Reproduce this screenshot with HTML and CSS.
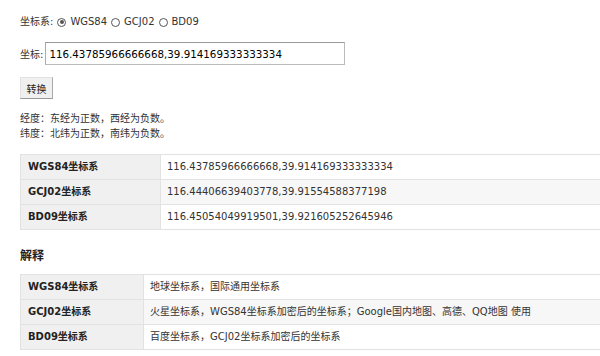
FILE: index.html
```html
<!DOCTYPE html>
<html lang="zh">
<head>
<meta charset="utf-8">
<title>坐标转换</title>
<link rel="stylesheet" href="styles.css">
</head>
<body>
<div class="page">
  <div class="sys-row">
    <span>坐标系:</span>
    <label class="radio"><span class="dot on"></span>WGS84</label>
    <label class="radio"><span class="dot"></span>GCJ02</label>
    <label class="radio"><span class="dot"></span>BD09</label>
  </div>
  <div class="coord-row">
    <span>坐标:</span>
    <input class="coord" type="text" value="116.43785966666668,39.914169333333334">
  </div>
  <button class="btn">转换</button>
  <div class="notes">
    <p>经度：东经为正数，西经为负数。</p>
    <p>纬度：北纬为正数，南纬为负数。</p>
  </div>
  <table class="grid res">
    <tr><th>WGS84坐标系</th><td>116.43785966666668,39.914169333333334</td></tr>
    <tr class="alt"><th>GCJ02坐标系</th><td>116.44406639403778,39.91554588377198</td></tr>
    <tr><th>BD09坐标系</th><td>116.45054049919501,39.921605252645946</td></tr>
  </table>
  <h3 class="title">解释</h3>
  <table class="grid exp">
    <tr><th>WGS84坐标系</th><td>地球坐标系，国际通用坐标系</td></tr>
    <tr class="alt"><th>GCJ02坐标系</th><td>火星坐标系，WGS84坐标系加密后的坐标系；Google国内地图、高德、QQ地图 使用</td></tr>
    <tr><th>BD09坐标系</th><td>百度坐标系，GCJ02坐标系加密后的坐标系</td></tr>
  </table>
</div>
</body>
</html>
```
FILE: styles.css
```css
html { overflow: hidden; background: #fff; }
body {
  margin: 0;
  font-family: "DejaVu Sans", "Noto Sans CJK SC", sans-serif;
  font-size: 10px;
  color: #333;
}
.page { padding: 0 0 0 20px; }
.sys-row {
  margin-top: 15px;
  line-height: 14px;
  height: 14px;
  display: flex;
  align-items: center;
  gap: 4px;
}
.radio { display: inline-flex; align-items: center; gap: 4px; }
.dot {
  width: 9px; height: 9px;
  border: 1px solid #555;
  border-radius: 50%;
  box-sizing: border-box;
  display: inline-block;
  position: relative;
  background: #fff;
}
.dot.on::after {
  content: "";
  position: absolute;
  left: 1.5px; top: 1.5px;
  width: 4px; height: 4px;
  border-radius: 50%;
  background: #555;
}
.coord-row {
  margin-top: 13px;
  display: flex;
  align-items: center;
  gap: 2px;
  height: 23px;
}
.coord {
  width: 300px;
  height: 23px;
  box-sizing: border-box;
  border: 1px solid #bbb;
  border-top-color: #999;
  border-left-color: #aaa;
  padding: 0 3px;
  font-family: "DejaVu Sans", sans-serif;
  font-size: 10.3px;
  color: #000;
  outline: none;
}
.btn {
  display: block;
  margin-top: 12px;
  width: 33px;
  height: 22px;
  padding: 0;
  background: #f0f0f0;
  border: 1px solid #e2e2e2;
  border-right-color: #aaa;
  border-bottom-color: #999;
  font-family: "Noto Sans CJK SC", sans-serif;
  font-size: 10px;
  color: #222;
}
.notes { margin-top: 12px; }
.notes p { margin: 0; line-height: 15px; }
.grid {
  border-collapse: collapse;
  width: 580px;
}
.grid th, .grid td {
  border: 1px solid #e2e2e2;
  height: 24px;
  padding: 0 6px;
  text-align: left;
  font-size: 10px;
  line-height: 12px;
}
.grid td { border-right: none; }
.grid th {
  background: #f0f0f0;
  font-weight: bold;
  color: #222;
  padding-left: 7px;
}
.grid tr.alt td { background: #f7f7f7; }
.res { margin-top: 13px; }
.res th { width: 126px; }
.exp th { width: 109px; }
.title {
  margin: 18px 0 10px;
  font-size: 12px;
  line-height: 16px;
  font-weight: bold;
  color: #222;
}
```
